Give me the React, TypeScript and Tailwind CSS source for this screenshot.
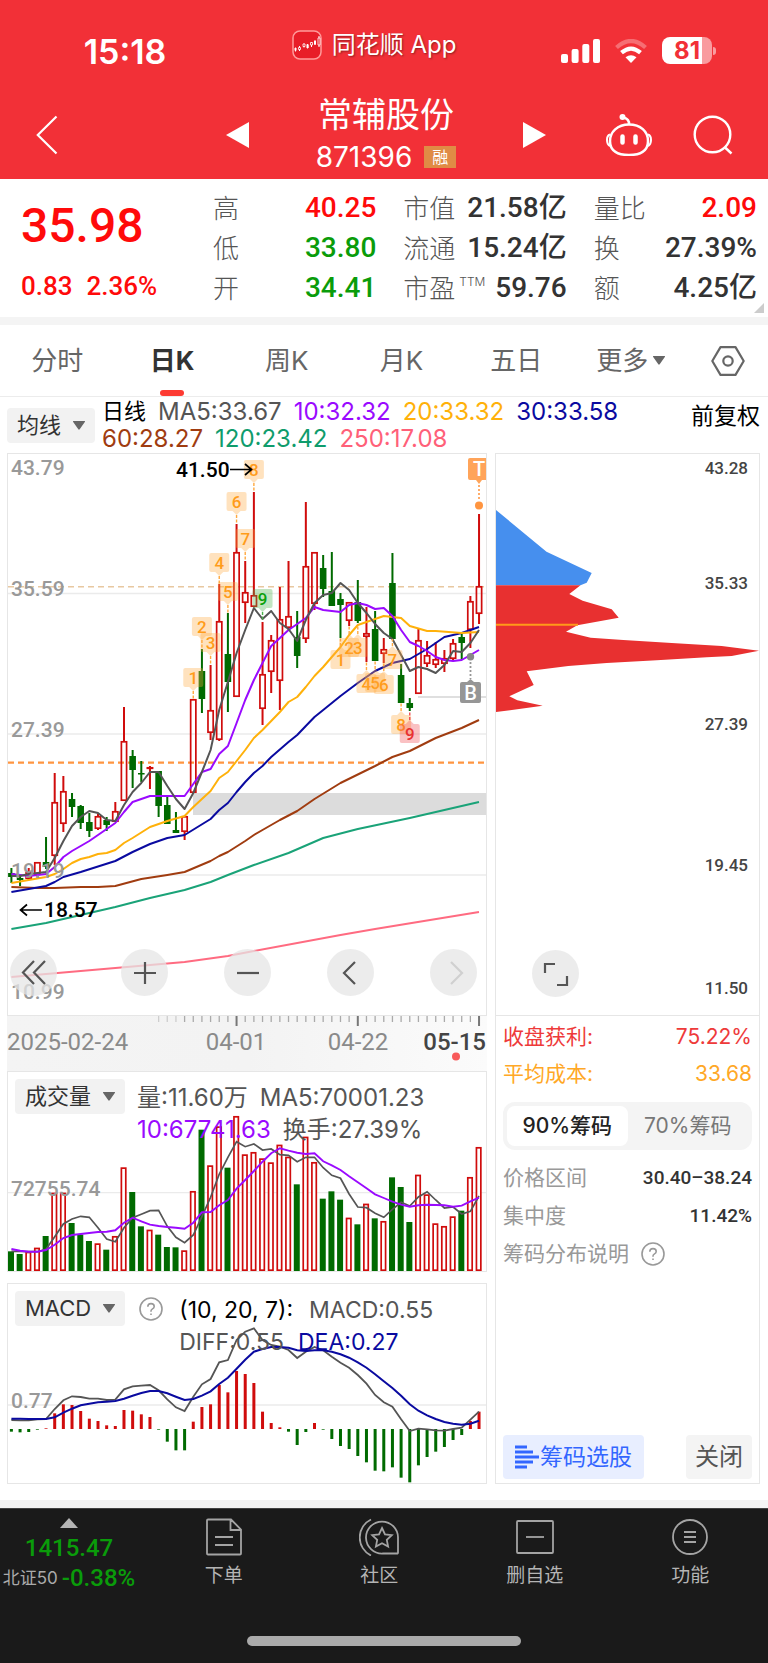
import React from "react";

type Candle = [kind: "r" | "g", high: number, top: number, bottom: number, low: number];

const CANDLES: Candle[] = [
  ["g", 868, 873, 877, 883], ["g", 875, 878, 880, 886], ["r", 868, 872, 879, 880], ["r", 862, 862, 875, 878],
  ["g", 837, 862, 867, 869], ["r", 773, 802, 856, 865], ["r", 776, 791, 824, 832], ["g", 793, 799, 807, 817],
  ["g", 805, 806, 823, 829], ["g", 813, 822, 831, 837], ["r", 814, 816, 829, 830], ["g", 817, 820, 825, 831],
  ["r", 802, 811, 822, 822], ["r", 707, 741, 801, 801], ["g", 750, 756, 770, 788], ["g", 761, 773, 774, 782],
  ["r", 766, 767, 769, 789], ["g", 771, 771, 806, 817], ["g", 796, 805, 824, 824], ["g", 812, 830, 833, 833],
  ["r", 816, 816, 832, 840], ["r", 699, 699, 793, 793], ["g", 649, 671, 699, 713], ["r", 665, 710, 733, 740],
  ["r", 584, 621, 740, 741], ["g", 613, 654, 682, 712], ["r", 524, 552, 697, 697], ["r", 561, 592, 603, 623],
  ["r", 492, 595, 607, 607], ["r", 622, 674, 709, 725], ["r", 635, 640, 672, 693], ["r", 587, 619, 681, 710],
  ["r", 561, 616, 628, 630], ["g", 611, 637, 656, 668], ["r", 502, 566, 639, 643], ["r", 552, 552, 604, 610],
  ["g", 555, 568, 589, 597], ["g", 552, 591, 606, 606], ["g", 593, 599, 605, 638], ["r", 602, 602, 621, 626],
  ["g", 580, 602, 621, 623], ["r", 607, 633, 637, 662], ["g", 611, 629, 661, 661], ["r", 638, 649, 654, 663],
  ["g", 553, 583, 639, 639], ["g", 664, 675, 703, 703], ["g", 698, 703, 708, 711], ["r", 629, 640, 694, 694],
  ["r", 641, 655, 664, 667], ["r", 642, 659, 665, 668], ["r", 650, 658, 664, 672], ["r", 639, 643, 659, 661],
  ["g", 633, 637, 643, 659], ["r", 596, 601, 630, 648], ["r", 514, 586, 614, 624],
];

type Line = { color: string; points: [number, number][] };

const AVERAGES: Line[] = [
  { color: "#ff6b81", points: [[0, 977], [20, 962], [25, 956], [28, 951], [38, 935], [42, 929], [54, 912]] },
  { color: "#1aa378", points: [[0, 929], [4, 923], [8, 915], [12, 907], [16, 898], [20, 890], [23, 882], [25, 875], [28, 865], [32, 853], [36, 838], [40, 829], [46, 818], [54, 802]] },
  { color: "#a03c10", points: [[0, 887], [3, 888], [5, 888], [8, 887], [10, 887], [12, 886], [15, 879], [18, 875], [20, 872], [23, 861], [24, 856], [25, 852], [27, 841], [28, 835], [29, 830], [31, 820], [33, 811], [35, 799], [38, 783], [42, 766], [44, 757], [46, 751], [49, 738], [52, 728], [54, 720]] },
  { color: "#0a0aa0", points: [[0, 892], [2, 889], [4, 886], [5, 882], [6, 877], [8, 872], [12, 861], [14, 852], [16, 844], [18, 838], [20, 835], [23, 819], [24, 810], [25, 803], [26, 792], [27, 782], [28, 773], [29, 766], [30, 757], [32, 742], [33, 735], [34, 726], [35, 717], [36, 710], [38, 696], [40, 683], [42, 671], [44, 663], [46, 659], [48, 649], [50, 637], [52, 633], [53, 630], [54, 627]] },
  { color: "#ffb10a", points: [[0, 883], [2, 880], [4, 877], [5, 874], [6, 869], [7, 863], [8, 859], [9, 857], [10, 854], [11, 853], [12, 850], [13, 843], [14, 838], [16, 827], [18, 821], [20, 816], [21, 807], [22, 799], [23, 791], [24, 778], [25, 772], [26, 761], [27, 750], [28, 738], [29, 730], [30, 721], [31, 712], [32, 702], [33, 697], [34, 687], [35, 676], [36, 667], [37, 657], [38, 647], [39, 635], [40, 625], [41, 622], [42, 619], [43, 616], [44, 617], [45, 618], [46, 626], [48, 631], [49, 631], [52, 633], [54, 632]] },
  { color: "#9a0aff", points: [[0, 874], [2, 876], [4, 874], [5, 867], [6, 857], [7, 851], [8, 846], [9, 841], [10, 835], [11, 829], [12, 823], [13, 812], [14, 802], [15, 799], [16, 796], [20, 796], [21, 784], [22, 772], [23, 769], [24, 754], [25, 746], [26, 723], [27, 700], [28, 680], [29, 663], [30, 646], [31, 638], [32, 630], [33, 624], [34, 618], [35, 607], [36, 610], [38, 612], [39, 605], [40, 603], [41, 605], [42, 609], [43, 608], [44, 616], [45, 630], [46, 642], [47, 646], [48, 651], [49, 657], [50, 660], [51, 661], [52, 660], [53, 655], [54, 650]] },
  { color: "#555555", points: [[0, 876], [1, 876], [2, 874], [4, 872], [5, 858], [6, 841], [7, 826], [8, 817], [9, 811], [10, 813], [11, 820], [12, 821], [13, 805], [14, 792], [15, 783], [16, 772], [17, 772], [18, 786], [19, 799], [20, 809], [21, 793], [22, 772], [23, 750], [24, 710], [25, 682], [26, 653], [27, 630], [28, 608], [29, 619], [30, 611], [31, 623], [32, 629], [33, 641], [34, 620], [35, 603], [36, 595], [37, 593], [38, 583], [39, 590], [40, 603], [41, 613], [42, 624], [43, 633], [44, 639], [45, 655], [46, 671], [47, 667], [48, 669], [49, 673], [50, 665], [51, 651], [52, 652], [53, 643], [54, 630]] },
];

const VOLUME_TOPS = [574, 582, 575, 563, 528, 398, 398, 489, 524, 543, 550, 569, 528, 322, 396, 499, 509, 524, 561, 562, 571, 393, 209, 316, 199, 323, 168, 283, 276, 295, 307, 254, 290, 373, 230, 306, 416, 394, 419, 473, 493, 431, 475, 483, 352, 381, 486, 344, 403, 490, 498, 469, 452, 351, 261];
const VOLUME_MA5 = [574, 574, 575, 575, 568, 530, 492, 477, 469, 472, 503, 537, 545, 503, 473, 463, 452, 451, 499, 532, 548, 525, 470, 412, 343, 292, 245, 260, 252, 270, 267, 284, 286, 305, 292, 292, 323, 346, 355, 402, 441, 443, 460, 472, 448, 427, 438, 411, 395, 420, 444, 441, 462, 454, 408];
const VOLUME_MA10 = [567, 572, 575, 575, 570, 554, 534, 525, 522, 519, 516, 515, 511, 488, 473, 484, 494, 498, 501, 503, 506, 488, 457, 456, 436, 420, 386, 360, 333, 305, 280, 265, 272, 278, 282, 280, 304, 316, 330, 349, 367, 385, 403, 414, 425, 434, 440, 436, 434, 435, 436, 440, 437, 424, 413];

const MACD_ENDS = [470, 472, 471, 464, 460, 415, 388, 390, 408, 431, 438, 451, 453, 405, 407, 418, 426, 464, 500, 526, 526, 440, 396, 388, 330, 352, 288, 297, 324, 410, 444, 457, 470, 510, 471, 444, 464, 492, 513, 522, 543, 562, 587, 589, 577, 608, 622, 571, 546, 530, 516, 495, 480, 438, 410];
const DIFF = [435, 436, 436, 433, 432, 402, 376, 364, 366, 371, 371, 375, 374, 343, 334, 332, 330, 346, 373, 397, 408, 365, 328, 312, 262, 255, 195, 170, 160, 195, 210, 215, 225, 249, 230, 216, 226, 245, 263, 278, 300, 326, 360, 382, 395, 433, 468, 461, 463, 466, 467, 462, 458, 434, 410];
const DEA = [431, 431, 432, 432, 432, 427, 413, 401, 391, 386, 382, 380, 378, 371, 362, 354, 348, 348, 355, 365, 375, 372, 362, 349, 327, 308, 281, 254, 230, 222, 216, 216, 218, 226, 228, 226, 226, 230, 238, 248, 262, 278, 298, 319, 339, 362, 388, 407, 421, 432, 441, 446, 449, 446, 437];

type Tag = { n: string; i: number; top: number; below?: boolean; anchor: number; bg?: string; fg?: string };
const TAGS: Tag[] = [
  { n: "1", i: 21, top: 668, anchor: 699 },
  { n: "2", i: 22, top: 617, anchor: 649 },
  { n: "3", i: 23, top: 633, anchor: 665 },
  { n: "4", i: 24, top: 553, anchor: 584 },
  { n: "5", i: 25, top: 582, anchor: 613 },
  { n: "6", i: 26, top: 492, anchor: 524 },
  { n: "7", i: 27, top: 529, anchor: 561 },
  { n: "8", i: 28, top: 460, anchor: 492 },
  { n: "9", i: 29, top: 589, anchor: 621, bg: "#4ab04a", fg: "#0aa00a" },
  { n: "1", i: 38, top: 650, anchor: 638, below: true },
  { n: "2", i: 39, top: 638, anchor: 626, below: true },
  { n: "3", i: 40, top: 638, anchor: 624, below: true },
  { n: "4", i: 41, top: 674, anchor: 662, below: true },
  { n: "5", i: 42, top: 673, anchor: 661, below: true },
  { n: "6", i: 43, top: 675, anchor: 663, below: true },
  { n: "7", i: 44, top: 650, anchor: 639, below: true },
  { n: "8", i: 45, top: 715, anchor: 703, below: true },
  { n: "9", i: 46, top: 724, anchor: 711, below: true, bg: "#f04850", fg: "#e83030" },
];

const xAt = (i: number) => 11.4 + i * 8.66;
const toPath = (points: [number, number][]) => points.map(([i, y]) => `${xAt(i).toFixed(1)},${y}`).join(" ");
const series = (values: number[], base: number) => toPath(values.map((v, i) => [i, +(base + v / 3).toFixed(1)]));

const RED = "#d00c0c";
const GREEN = "#006a00";
const latin = "font-['Roboto','Noto_Sans_CJK_SC',sans-serif]";

function SignalTag({ n, i, top, below, anchor, bg = "#ffa940", fg = "#ff9c1a" }: Tag) {
  const x = xAt(i);
  const tip = below ? top - 4 : top + 23;
  const base = below ? top : top + 19;
  return (
    <g>
      <rect x={x - 10} y={top} width="20" height="19" rx="2" fill={bg} opacity="0.34" />
      <path d={`M${x - 4} ${base}L${x} ${tip}L${x + 4} ${base}Z`} fill={bg} opacity="0.34" />
      <path d={`M${x} ${tip}V${anchor}`} stroke={bg} strokeWidth="1.4" strokeDasharray="3 1.5" />
      <text x={x} y={top + 16} textAnchor="middle" fontSize="17" fontWeight="500" fill={fg}>{n}</text>
    </g>
  );
}

function PriceChart() {
  return (
    <svg viewBox="8 454 478 561" className={`block h-auto w-full ${latin}`} role="img" aria-label="日K线图">
      <rect x="193" y="793" width="293" height="22" fill="#dcdcdc" />
      {[593.5, 734, 875].map((y) => <path key={y} d={`M8 ${y}H486`} stroke="#ebebeb" strokeWidth="1.3" />)}
      <path d="M8 586.7H486" stroke="#e8c8a0" strokeWidth="1.6" strokeDasharray="6 4" />
      <path d="M8 762.7H486" stroke="#ff9540" strokeWidth="2.2" strokeDasharray="6 4" />
      <path d="M418 697H486" stroke="#d4d4d4" strokeWidth="1.6" />
      {CANDLES.map(([kind, high, top, bottom, low], i) => {
        const x = xAt(i);
        const h = Math.max(bottom - top, 1.5);
        return kind === "g" ? (
          <g key={i} fill={GREEN}>
            <rect x={x - 1} y={high} width="2" height={low - high} />
            <rect x={x - 3.3} y={top} width="6.6" height={h} />
          </g>
        ) : (
          <g key={i} stroke={RED} fill="none">
            <path d={`M${x} ${high}V${top}M${x} ${bottom}V${low}`} strokeWidth="2" />
            <rect x={x - 2.6} y={top + 0.8} width="5.2" height={Math.max(h - 1.6, 0.5)} strokeWidth="1.7" />
          </g>
        );
      })}
      {AVERAGES.map((l) => (
        <polyline key={l.color} points={toPath(l.points)} fill="none" stroke={l.color} strokeWidth="2" strokeLinejoin="round" />
      ))}
      {TAGS.map((t) => <SignalTag key={`${t.n}-${t.i}`} {...t} />)}
      <g>
        <path d="M468 460q0-2 2-2h17v22h-5l-3 4l-3-4h-6q-2 0-2-2Z" fill="#ffa45a" />
        <path d="M479 485V500" stroke="#ffa45a" strokeWidth="1.8" strokeDasharray="2 2" />
        <circle cx="479" cy="505.5" r="4" fill="#ff9540" />
        <text x="479" y="476" textAnchor="middle" fontSize="20" fontWeight="500" fill="#fff">T</text>
        <path d="M462 682h5l3.500-3l3.500 3h5q2 0 2 2v17q0 2-2 2h-17q-2 0-2-2v-17q0-2 2-2Z" fill="#969696" />
        <path d="M470.500 662V679" stroke="#969696" strokeWidth="1.8" strokeDasharray="2 2" />
        <circle cx="470.500" cy="656.700" r="3.700" fill="#888" />
        <text x="470.500" y="700" textAnchor="middle" fontSize="20" fontWeight="500" fill="#fff">B</text>
      </g>
      <g fontSize="21" fontWeight="500" fill="#999">
        <text x="11" y="475">43.79</text>
        <text x="11" y="596">35.59</text>
        <text x="11" y="737">27.39</text>
        <text x="11" y="878">19.19</text>
        <text x="11" y="999">10.99</text>
      </g>
      <g fontSize="21" fontWeight="500" fill="#000">
        <text x="176" y="477">41.50</text>
        <text x="44" y="917">18.57</text>
      </g>
      <path d="M230 469.500H252M245 464l6.500 5.500L245 475M42 910H21M27 904.500L20.500 910L27 915.500" stroke="#000" strokeWidth="1.700" fill="none" />
    </svg>
  );
}

function DateAxis() {
  return (
    <svg viewBox="7 1016 480 55" className={`block h-auto w-full bg-linear-to-r from-[#f4f4f4] via-[#f3f3f3] to-[#fbfbfb] ${latin}`} role="img" aria-label="日期">
      {Array.from({ length: 38 }, (_, k) => k + 17).map((i) => {
        const major = i === 26 || i === 40 || i === 54;
        return <path key={i} d={`M${xAt(i)} 1016V${major ? 1026 : 1022}`} stroke={major ? "#777" : "#aaa"} strokeWidth={major ? 2 : 1.3} opacity={i < 20 ? 0.5 : 1} />;
      })}
      <g fontSize="24" fill="#8a8a8a">
        <text x="7" y="1050">2025-02-24</text>
        <text x="236" y="1050" textAnchor="middle">04-01</text>
        <text x="358" y="1050" textAnchor="middle">04-22</text>
        <text x="486" y="1050" textAnchor="end" fontWeight="500" fill="#444">05-15</text>
      </g>
      <circle cx="456" cy="1056.500" r="4" fill="#f85a5a" />
    </svg>
  );
}

function VolumeChart() {
  return (
    <svg viewBox="8 1072 478 199" className={`block h-auto w-full [grid-area:1/1] ${latin}`} role="img" aria-label="成交量图">
      <path d="M8 1192.700H486" stroke="#ebebeb" strokeWidth="1.300" />
      {VOLUME_TOPS.map((v, i) => {
        const y = 1060 + v / 3;
        const x = xAt(i) - 0.4;
        return CANDLES[i][0] === "g" ? (
          <rect key={i} x={x - 3} y={y} width="6" height={1271 - y} fill={GREEN} />
        ) : (
          <rect key={i} x={x - 2.2} y={y + 0.8} width="4.400" height={1269.4 - y} fill="#fff" stroke={RED} strokeWidth="1.700" />
        );
      })}
      <polyline points={series(VOLUME_MA5, 1060)} fill="none" stroke="#555" strokeWidth="1.700" />
      <polyline points={series(VOLUME_MA10, 1060)} fill="none" stroke="#9a0aff" strokeWidth="1.900" />
      <text x="11" y="1196" fontSize="21" fontWeight="500" fill="#999">72755.74</text>
    </svg>
  );
}

function MacdChart() {
  return (
    <svg viewBox="8 1284 478 199" className={`block h-auto w-full [grid-area:1/1] ${latin}`} role="img" aria-label="MACD图">
      <path d="M8 1405H486" stroke="#ebebeb" strokeWidth="1.300" />
      {MACD_ENDS.map((v, i) => {
        const up = v < 462;
        const y = up ? 1275 + v / 3 : 1429;
        return <rect key={i} x={xAt(i) - 1.5} y={y} width="3" height={Math.abs(462 - v) / 3} fill={up ? RED : GREEN} />;
      })}
      <polyline points={series(DIFF, 1275)} fill="none" stroke="#555" strokeWidth="1.800" />
      <polyline points={series(DEA, 1275)} fill="none" stroke="#0a0aa0" strokeWidth="2" />
      <text x="11" y="1408" fontSize="21" fontWeight="500" fill="#999">0.77</text>
    </svg>
  );
}

function ChipChart() {
  return (
    <svg viewBox="496 454 263 561" className={`block h-auto w-full ${latin}`} role="img" aria-label="筹码分布图">
      <path d="M496 510L546.500 551.700L591.700 573L586.700 582.700L580.500 585.300H496Z" fill="#468fee" />
      <path d="M496 585.300H580.500L569.300 594L582.700 600.700L611.700 609.300L618.700 617.700L577.300 625.300L566 631.700L590.700 637.700L623.300 640L671.700 643L721.700 646L743.300 648.700L759 650.700L731.700 656L706.700 657.300L656.700 660.300L606.700 663L568.300 666L526.700 671.300L533.700 685L509.300 696.300L517.300 700.300L542.700 705.700L510 710.300L496 712Z" fill="#e83030" />
      <path d="M496 624.700H578" stroke="#ff9a1a" strokeWidth="2" />
      <g fontSize="17" fontWeight="500" fill="#444" textAnchor="end">
        <text x="748" y="474">43.28</text>
        <text x="748" y="589">35.33</text>
        <text x="748" y="730">27.39</text>
        <text x="748" y="871">19.45</text>
        <text x="748" y="994">11.50</text>
      </g>
    </svg>
  );
}

function Caret() {
  return (
    <svg viewBox="0 0 12 9" className="h-[9px] w-3" aria-hidden="true"><path d="M0.500 0h11q1 0 .3 1L6.700 8.300q-.7.9-1.400 0L.2 1q-.7-1 .3-1Z" fill="#666" /></svg>
  );
}

function Picker({ label }: { label: string }) {
  return (
    <button type="button" className="flex h-[35px] shrink-0 items-center gap-3 rounded bg-[#f2f2f2] px-[10px] text-[22px] text-[#333]">
      {label}<Caret />
    </button>
  );
}

function RoundButton({ label, muted, children }: { label: string; muted?: boolean; children: React.ReactNode }) {
  return (
    <button type="button" aria-label={label} className={`flex size-[47px] items-center justify-center rounded-full bg-[#e6e6e6]/75 ${muted ? "text-[#d0d0d0]" : "text-[#555]"}`}>
      <svg viewBox="0 0 26 26" className="size-[26px]" fill="none" stroke="currentColor" strokeWidth="2.200">{children}</svg>
    </button>
  );
}

function Help({ label }: { label: string }) {
  return (
    <button type="button" aria-label={label} className="size-6 shrink-0 text-[#999]">
      <svg viewBox="0 0 24 24" className="size-6" fill="none" stroke="currentColor" strokeWidth="1.600">
        <circle cx="12" cy="12" r="11" />
        <path d="M8.800 9.800q0-3.200 3.200-3.200t3.200 2.800q0 1.500-1.700 2.500T12 14.200v.5" />
        <path d="M12 16.400v1.600" />
      </svg>
    </button>
  );
}

function Stat({ label, value, color, sup }: { label: string; value: string; color: string; sup?: string }) {
  return (
    <div className="flex h-10 items-center justify-between whitespace-nowrap">
      <dt className="flex items-center text-[26px] font-light text-[#555]">{label}{sup && <sup className="pl-1 text-xs">{sup}</sup>}</dt>
      <dd className={`${latin} text-[28px] font-medium ${color}`}>{value}</dd>
    </div>
  );
}

function Header() {
  return (
    <header className="bg-[#f23037] text-white">
      <div className="grid h-[90px] grid-cols-[250px_1fr_270px] items-start pt-[30px]">
        <div className="mt-[6px] text-center text-[34px] leading-8 font-semibold">15:18</div>
        <div className="flex items-center justify-center gap-[10px] whitespace-nowrap">
          <svg viewBox="0 0 30 30" className="size-[30px]" aria-hidden="true">
            <rect x="1" y="1" width="28" height="28" rx="7" fill="#e81d28" stroke="#ff9a9a" strokeWidth="1.500" />
            <path d="M3.500 17.500v4M7.500 16v5M12 13.500v4M15.500 14v4.500M19.500 12v5M23 10v5M27 6v11" stroke="#fff" strokeWidth="1" />
            <path d="M2.500 18h2v2.500h-2zM14.500 14.500h2.200v3.500h-2.200zM22 11h2v3.500h-2z" fill="#fff" />
            <path d="M6.500 17.500h2v2h-2zM11 14h2v2.500h-2zM18.500 12.500h2v2.500h-2zM26 8h2v7h-2z" fill="#e81d28" stroke="#fff" strokeWidth=".8" />
          </svg>
          <span className="text-2xl leading-[30px] text-shadow-[1px_1px_2px_rgb(0_0_0/0.4)]">同花顺 App</span>
        </div>
        <div className="mt-[7px] flex items-center justify-end gap-[15px] pr-[52px]">
          <svg viewBox="0 0 39 24" className="h-6 w-[39px]" fill="#fff" aria-label="信号">
            <rect y="15" width="7" height="9" rx="2" /><rect x="10.600" y="10" width="7" height="14" rx="2" />
            <rect x="21.300" y="5" width="7" height="19" rx="2" /><rect x="32" width="7" height="24" rx="2" />
          </svg>
          <svg viewBox="0 0 32 24" className="h-6 w-8" fill="none" stroke="#fff" strokeWidth="4.200" aria-label="无线网络">
            <path d="M1.500 8.500Q16-4.500 30.500 8.500" opacity="0.300" />
            <path d="M6.500 13.700Q16 5.500 25.500 13.700" />
            <path d="M16 24L10.500 18.300Q16 14 21.500 18.300Z" fill="#fff" stroke="none" />
          </svg>
          <div className="flex items-center gap-px">
            <div className="flex h-[27px] w-[50px] items-center justify-center overflow-hidden rounded-lg bg-linear-to-r from-white from-80% to-[#f99b9f] to-80% text-2xl leading-none font-bold text-[#f23037]">81</div>
            <div className="h-2 w-[3px] rounded-r bg-[#f99b9f]" />
          </div>
        </div>
      </div>
      <div className="grid h-[89px] grid-cols-[1fr_322px_221px] items-center">
        <button type="button" aria-label="返回" className="ml-9 w-[22px]">
          <svg viewBox="0 0 22 40" className="h-10 w-[22px]" fill="none" stroke="#fff" strokeWidth="2.200"><path d="M20.500 1.500L1.800 20L20.500 38.500" /></svg>
        </button>
        <div className="flex items-center justify-between">
          <button type="button" aria-label="上一只">
            <svg viewBox="0 0 24 26" className="h-[26px] w-6" fill="#fff"><path d="M24 0V26L1 13Z" /></svg>
          </button>
          <div className="flex flex-col items-center gap-2">
            <h1 className="text-[34px] leading-9">常辅股份</h1>
            <div className="flex items-center gap-3">
              <span className="text-[28px] leading-8">871396</span>
              <span className="bg-[#e08b45] px-2 text-base leading-[22px]">融</span>
            </div>
          </div>
          <button type="button" aria-label="下一只">
            <svg viewBox="0 0 24 26" className="h-[26px] w-6" fill="#fff"><path d="M0 0V26L23 13Z" /></svg>
          </button>
        </div>
        <div className="flex items-center justify-end gap-[41px] pr-[35px]">
          <button type="button" aria-label="智能助手">
            <svg viewBox="0 0 46 42" className="h-[42px] w-[46px]" fill="none" stroke="#fff" strokeWidth="2.500">
              <path d="M23 10.500C34.500 10.500 42 17.500 42 27S35.500 41 23 41S4 36 4 27S11.500 10.500 23 10.500Z" />
              <path d="M4 20.500Q1 21.500 1 26T4 32M42 20.500Q45 21.500 45 26T42 32" strokeWidth="2" />
              <path d="M23 10.500Q23.500 5 17.500 3.500" />
              <circle cx="16.500" cy="3" r="3" fill="#fff" stroke="none" />
              <path d="M16.500 22.500v6M29.500 22.500v6" strokeWidth="4.500" strokeLinecap="round" />
            </svg>
          </button>
          <button type="button" aria-label="搜索">
            <svg viewBox="0 0 40 40" className="size-10" fill="none" stroke="#fff" strokeWidth="2.400">
              <circle cx="19.500" cy="19.500" r="17.800" /><path d="M31.500 32L38.500 38.500" />
            </svg>
          </button>
        </div>
      </div>
    </header>
  );
}

const TABS = ["分时", "日K", "周K", "月K", "五日"];

export default function App() {
  return (
    <div className="min-h-screen bg-white font-['Inter','Noto_Sans_CJK_SC',sans-serif] text-[#333]">
      <Header />

      <section className="relative grid grid-cols-[165px_1fr_1fr_1fr] gap-x-[27px] pt-[9px] pr-[11px] pb-[9px] pl-[21px]">
        <div className={`whitespace-nowrap text-[#ff0a0a] ${latin}`}>
          <div className="flex h-[76px] items-center text-5xl font-medium">35.98</div>
          <div className="flex h-11 items-center gap-[14px] text-[26px] font-medium"><span>0.83</span><span>2.36%</span></div>
        </div>
        <dl>
          <Stat label="高" value="40.25" color="text-[#ff0a0a]" />
          <Stat label="低" value="33.80" color="text-[#0a9c0a]" />
          <Stat label="开" value="34.41" color="text-[#0a9c0a]" />
        </dl>
        <dl>
          <Stat label="市值" value="21.58亿" color="text-[#333]" />
          <Stat label="流通" value="15.24亿" color="text-[#333]" />
          <Stat label="市盈" sup="TTM" value="59.76" color="text-[#333]" />
        </dl>
        <dl>
          <Stat label="量比" value="2.09" color="text-[#ff0a0a]" />
          <Stat label="换" value="27.39%" color="text-[#333]" />
          <Stat label="额" value="4.25亿" color="text-[#333]" />
        </dl>
        <svg viewBox="0 0 10 10" className="absolute right-1 bottom-1 size-[10px]" aria-hidden="true"><path d="M10 0V10H0Z" fill="#ccc" /></svg>
      </section>

      <nav className="grid h-20 grid-cols-[repeat(6,115fr)_80fr] border-t-8 border-b border-t-[#f4f4f4] border-b-[#ececec] text-[26px] text-[#666]">
        {TABS.map((t) => (
          <button key={t} type="button" className={`flex flex-col items-center ${t === "日K" ? "font-bold text-[#333]" : ""}`}>
            <span className="flex flex-1 items-center pt-[6px]">{t}</span>
            <span className={`h-[6px] w-6 rounded-full ${t === "日K" ? "bg-[#fd3a32]" : ""}`} />
          </button>
        ))}
        <button type="button" className="flex items-center justify-center gap-[5px] whitespace-nowrap">更多<Caret /></button>
        <button type="button" aria-label="设置" className="flex items-center justify-center">
          <svg viewBox="0 0 34 30" className="h-[30px] w-[34px]" fill="none" stroke="#666" strokeWidth="2.200">
            <path d="M9.500 1.100H24.500L32.700 15L24.500 28.900H9.500L1.300 15Z" strokeLinejoin="round" /><circle cx="17" cy="15" r="4.700" />
          </svg>
        </button>
      </nav>

      <div className="flex h-14 items-center gap-[7px] pr-2 pl-[7px] whitespace-nowrap">
        <Picker label="均线" />
        <div className="flex-1 text-2xl leading-[27px]">
          <div className="flex gap-3">
            <span className="text-[22px] text-black">日线</span>
            <span className="text-[#555]">MA5:33.67</span>
            <span className="text-[#9a0aff]">10:32.32</span>
            <span className="text-[#ffb10a]">20:33.32</span>
            <span className="text-[#0a0aa0]">30:33.58</span>
          </div>
          <div className="flex gap-3">
            <span className="text-[#a03c10]">60:28.27</span>
            <span className="text-[#0f9c6c]">120:23.42</span>
            <span className="text-[#ff6078]">250:17.08</span>
          </div>
        </div>
        <button type="button" className="self-start text-[23px] leading-[38px] text-black">前复权</button>
      </div>

      <main className="grid grid-cols-[1fr_265px] gap-2 pr-2 pb-4 pl-[7px]">
        <div className="min-w-0">
          <div className="relative border border-[#e6e6e6]">
            <PriceChart />
            <div className="absolute bottom-[19px] left-[2px] flex gap-14">
              <div className="mr-2">
                <RoundButton label="快退"><path d="M13 1L2 12.500L13 24M24 1L13 12.500L24 24" /></RoundButton>
              </div>
              <RoundButton label="放大"><path d="M13 2V24M2 13H24" /></RoundButton>
              <RoundButton label="缩小"><path d="M2 13H24" /></RoundButton>
              <RoundButton label="向前"><path d="M17 2L6 13L17 24" /></RoundButton>
              <RoundButton label="向后" muted><path d="M10 2L21 13L10 24" /></RoundButton>
            </div>
          </div>
          <DateAxis />
          <div className="grid border border-[#e6e6e6]">
            <VolumeChart />
            <div className="z-10 flex items-start gap-3 pt-[7px] pl-[7px] [grid-area:1/1]">
              <Picker label="成交量" />
              <div className="pt-[3px] text-2xl leading-8 whitespace-nowrap text-[#555]">
                <div className="flex gap-3"><span>量:11.60万</span><span>MA5:70001.23</span></div>
                <div className="flex gap-3"><span className="text-[#9a0aff]">10:67741.63</span><span>换手:27.39%</span></div>
              </div>
            </div>
          </div>
          <div className="mt-[11px] grid border border-[#e6e6e6]">
            <MacdChart />
            <div className="z-10 flex items-start pt-[7px] pl-[7px] [grid-area:1/1]">
              <Picker label="MACD" />
              <div className="flex h-9 items-center pr-4 pl-[14px]"><Help label="MACD说明" /></div>
              <div className="pt-[3px] text-[23px] leading-8 whitespace-nowrap text-[#555]">
                <div className="flex gap-4"><span className="text-black">(10, 20, 7):</span><span>MACD:0.55</span></div>
                <div className="flex gap-[14px]"><span>DIFF:0.55</span><span className="text-[#0a0aa0]">DEA:0.27</span></div>
              </div>
            </div>
          </div>
        </div>

        <aside className="flex flex-col border border-[#e6e6e6] text-[21px]">
          <div className="relative border-b border-[#e6e6e6]">
            <ChipChart />
            <div className="absolute bottom-[18px] left-9">
              <RoundButton label="全屏"><path d="M2 12V3H12M24 15V24H14" /></RoundButton>
            </div>
          </div>
          <div className="flex flex-1 flex-col px-[7px] pt-[2px] pb-1">
            <div className="flex h-[37px] items-center justify-between text-[#ee3a3a]"><span>收盘获利:</span><span>75.22%</span></div>
            <div className="flex h-[37px] items-center justify-between text-[#ffa826]"><span>平均成本:</span><span>33.68</span></div>
            <div className="mt-[10px] mb-[9px] flex h-12 rounded-xl bg-[#f4f4f4] p-1 whitespace-nowrap">
              <button type="button" className="flex-1 rounded-lg bg-white font-medium text-[#222]">90%筹码</button>
              <button type="button" className="flex-1 text-[#777]">70%筹码</button>
            </div>
            <div className="flex h-[38px] items-center justify-between text-[#999]">
              <span>价格区间</span><span className={`text-[19px] font-medium text-[#333] ${latin}`}>30.40–38.24</span>
            </div>
            <div className="flex h-[38px] items-center justify-between text-[#999]">
              <span>集中度</span><span className={`text-[19px] font-medium text-[#333] ${latin}`}>11.42%</span>
            </div>
            <div className="flex h-[38px] items-center gap-3 text-[#999]"><span>筹码分布说明</span><Help label="筹码分布说明" /></div>
            <div className="mt-auto flex h-11 justify-between">
              <button type="button" className="flex items-center gap-px rounded bg-[#e8eeff] px-3 text-[23px] text-[#3366ff]">
                <svg viewBox="0 0 24 24" className="size-6" stroke="currentColor" strokeWidth="3" aria-hidden="true">
                  <path d="M0 2H12M0 7H18M0 12H24M0 17H18M0 22H12" />
                </svg>
                筹码选股
              </button>
              <button type="button" className="rounded bg-[#f4f4f4] px-[9px] text-2xl text-[#555]">关闭</button>
            </div>
          </div>
        </aside>
      </main>

      <footer className="border-t-8 border-[#f4f4f4]">
        <div className="flex h-[155px] flex-col border-t border-[#444] bg-[#1a1a1a]">
          <div className="flex flex-1 items-start">
            <button type="button" className="flex w-[146px] flex-col items-center pt-[9px] pr-2 whitespace-nowrap">
              <svg viewBox="0 0 18 10" className="h-[10px] w-[18px]" aria-hidden="true"><path d="M9 0L18 10H0Z" fill="#b4b4b4" /></svg>
              <span className={`mt-1 text-2xl leading-8 font-medium text-[#0a9c0a] ${latin}`}>1415.47</span>
              <span className="flex items-center gap-1 leading-7">
                <span className="text-[17px] text-[#aaa]">北证50</span>
                <span className={`text-2xl leading-7 font-medium text-[#0a9c0a] ${latin}`}>-0.38%</span>
              </span>
            </button>
            <FooterItem label="下单">
              <path d="M3 2.500Q3 1.500 4 1.500H27L37 11.500V35.500Q37 36.500 36 36.500H4Q3 36.500 3 35.500ZM26.500 2V12H36.500M11 19H29M11 27H29" />
            </FooterItem>
            <FooterItem label="社区">
              <path d="M39 35V20A16 16 0 1 0 24 35.500H38.500ZM12 1.500A20 20 0 0 0 12 37.500" />
              <path d="M23 10l3 6.300 6.800.8-5 4.700 1.300 6.800-6.100-3.300-6.100 3.300 1.300-6.800-5-4.700 6.800-.8Z" />
            </FooterItem>
            <FooterItem label="删自选">
              <rect x="2" y="3" width="36" height="32" rx="1" /><path d="M11 19H29" />
            </FooterItem>
            <FooterItem label="功能">
              <circle cx="20" cy="19" r="17" /><path d="M14 14H26M14 19H26M14 24H26" />
            </FooterItem>
          </div>
          <div className="mx-auto mb-[17px] h-[10px] w-[274px] rounded-full bg-[#aaa]" />
        </div>
      </footer>
    </div>
  );
}

function FooterItem({ label, children }: { label: string; children: React.ReactNode }) {
  return (
    <button type="button" className="flex flex-1 flex-col items-center pt-[9px] text-[19px] leading-7 text-[#b4b4b4]">
      <svg viewBox="0 0 40 38" className="mb-[6px] h-[38px] w-10" fill="none" stroke="#a4a4a4" strokeWidth="1.800">{children}</svg>
      {label}
    </button>
  );
}
